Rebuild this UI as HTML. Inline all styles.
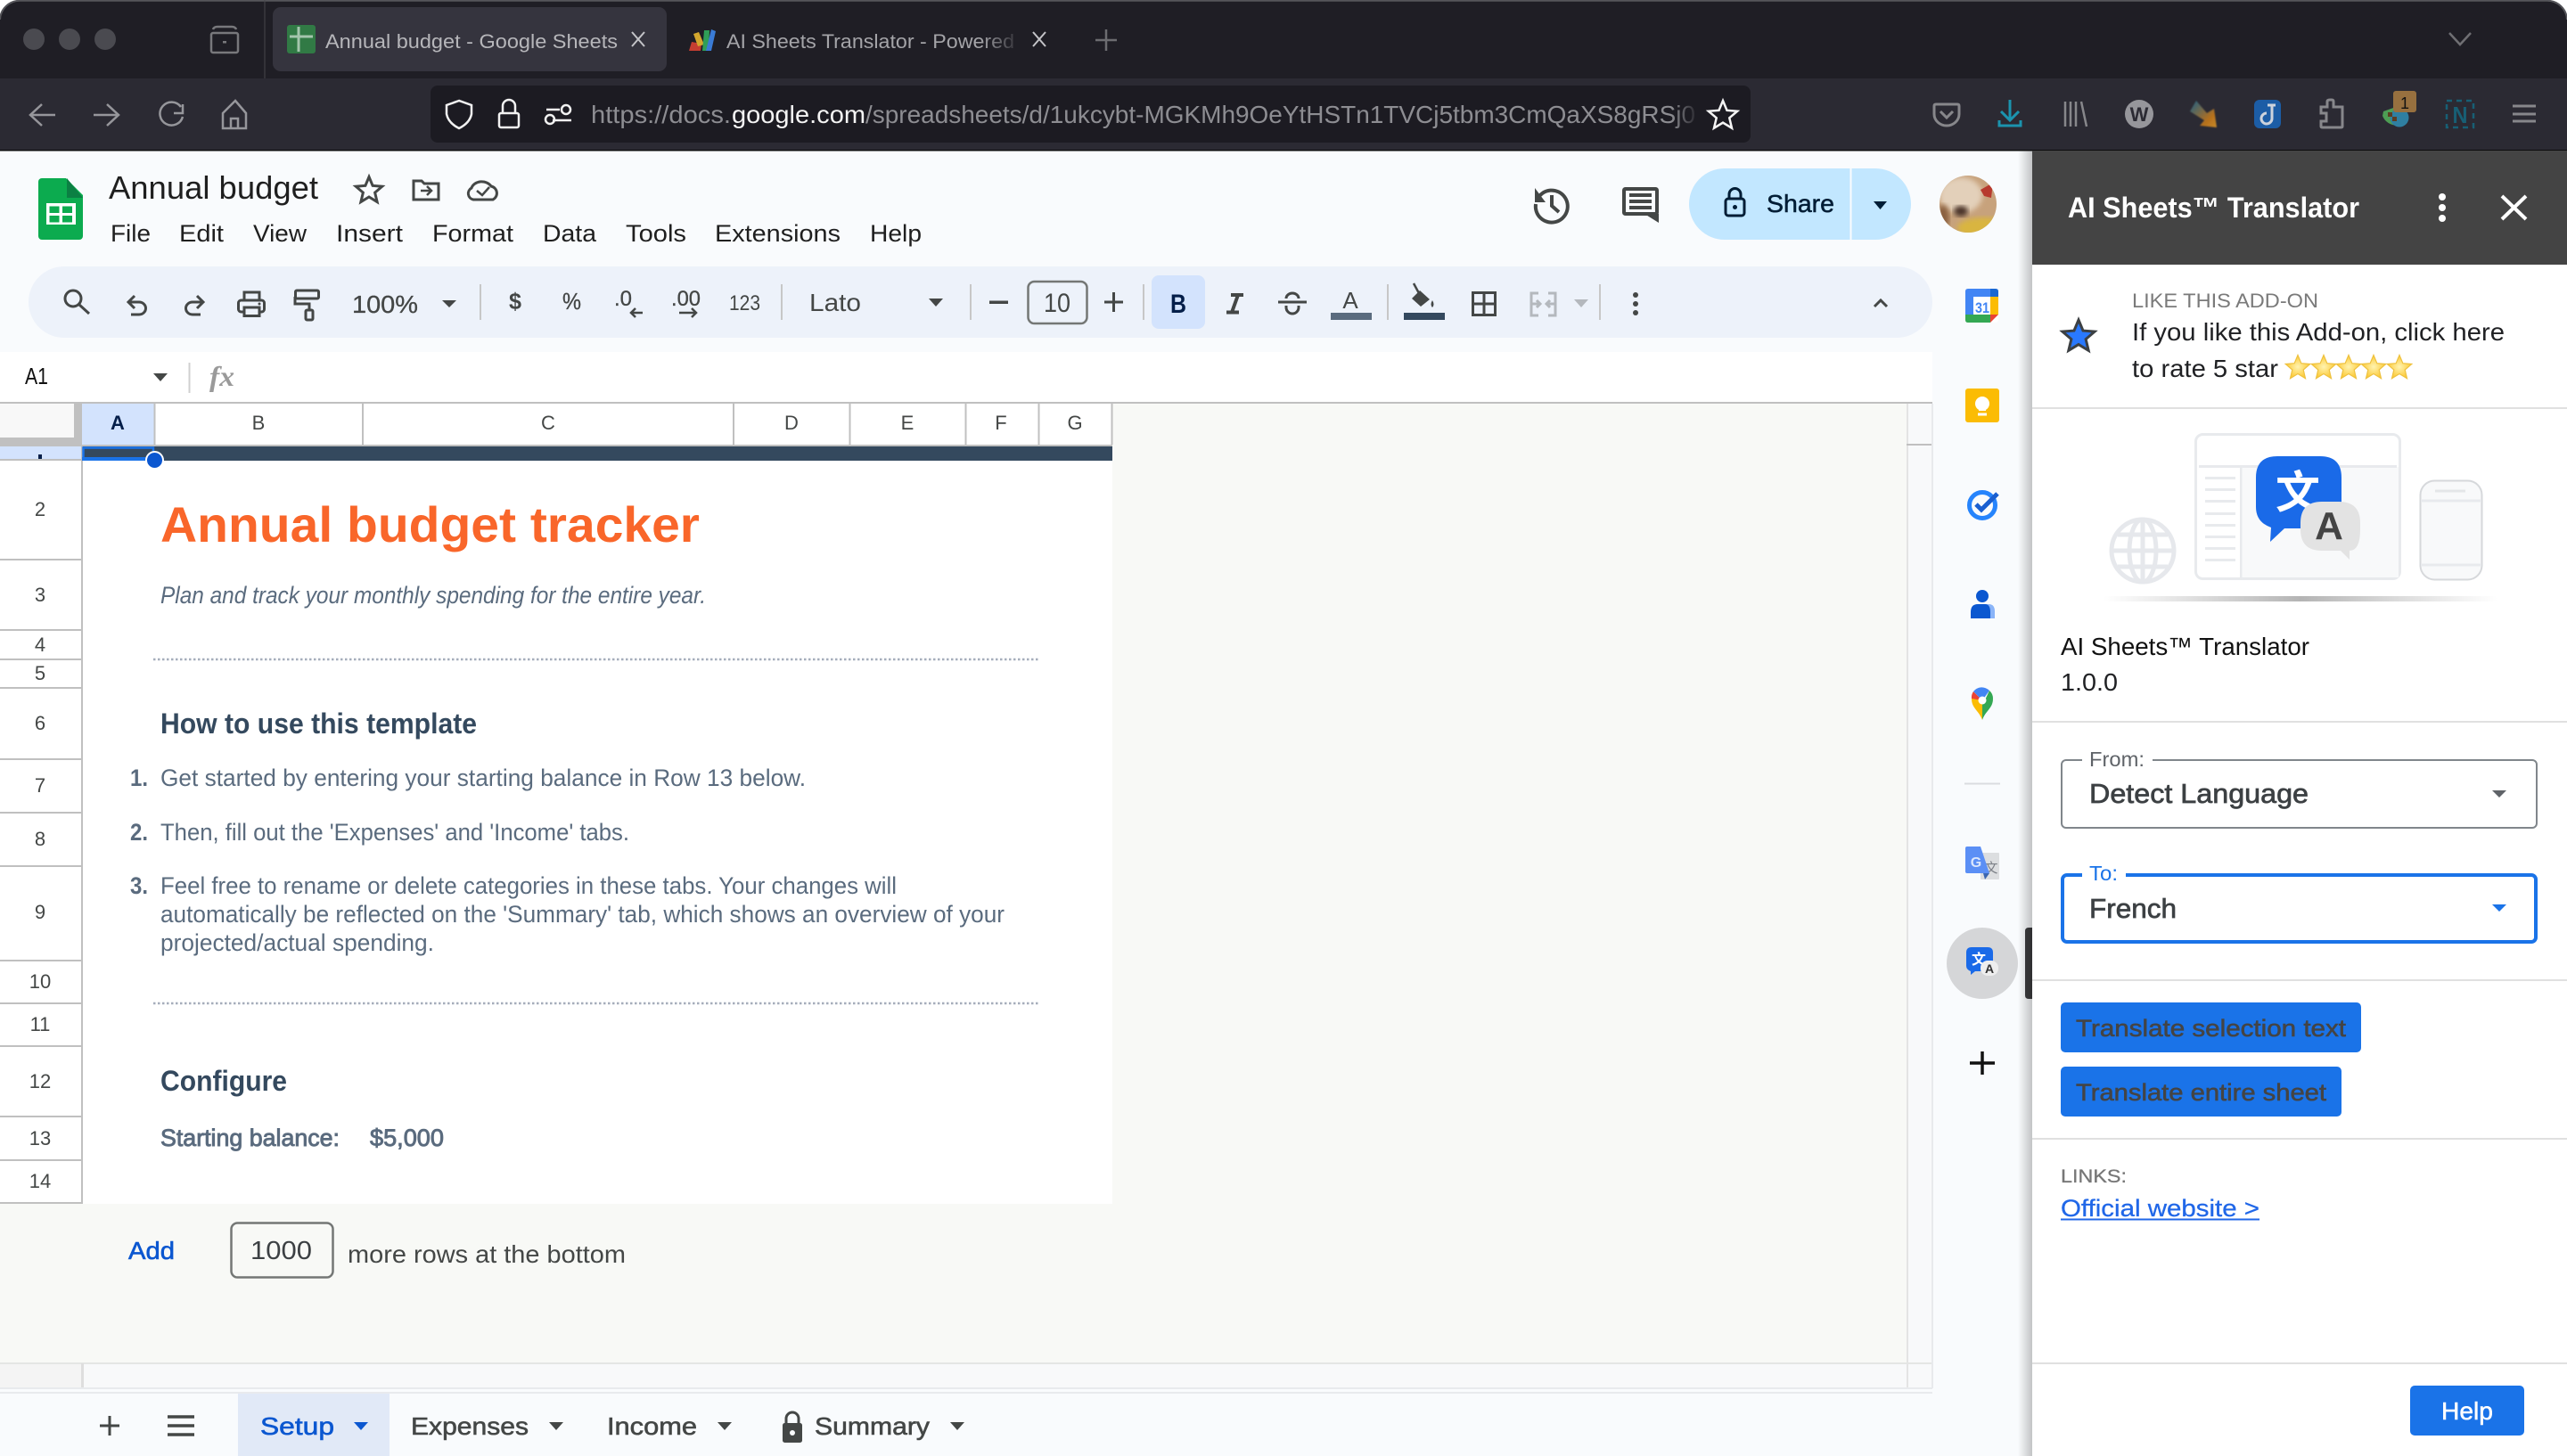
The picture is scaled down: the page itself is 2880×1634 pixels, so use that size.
<!DOCTYPE html>
<html lang="en"><head><meta charset="utf-8"><title>Annual budget - Google Sheets</title>
<style>
html,body{margin:0;padding:0;background:#f9fbfd;width:2880px;height:1634px;overflow:hidden}
svg{display:block}
text{font-family:"Liberation Sans","Noto Sans CJK SC",sans-serif;white-space:pre}
</style></head><body>
<svg width="2880" height="1634" viewBox="0 0 2880 1634" xmlns="http://www.w3.org/2000/svg">
<defs>
<polygon id="st" vector-effect="non-scaling-stroke" points="0,-1 .2645,-.364 .951,-.309 .428,.139 .588,.809 0,.45 -.588,.809 -.428,.139 -.951,-.309 -.2645,-.364"/>
<linearGradient id="fade1"><stop offset="0" stop-color="#1f1e25" stop-opacity="0"/><stop offset="1" stop-color="#1f1e25"/></linearGradient>
<linearGradient id="fade2"><stop offset="0" stop-color="#1c1b22" stop-opacity="0"/><stop offset="1" stop-color="#1c1b22"/></linearGradient>
<linearGradient id="psh"><stop offset="0" stop-color="#000" stop-opacity="0"/><stop offset="1" stop-color="#000" stop-opacity=".22"/></linearGradient>
<linearGradient id="shd"><stop offset="0" stop-color="#bbb" stop-opacity="0"/><stop offset=".5" stop-color="#b4b4b4"/><stop offset="1" stop-color="#bbb" stop-opacity="0"/></linearGradient>
<radialGradient id="gold"><stop offset="0" stop-color="#fff3b0"/><stop offset="1" stop-color="#fcc934"/></radialGradient>
<linearGradient id="comet" x1="0" y1="0" x2="1" y2="1"><stop offset="0" stop-color="#1c5f86"/><stop offset=".7" stop-color="#b5701d"/><stop offset="1" stop-color="#c98a28"/></linearGradient>
<filter id="b3"><feGaussianBlur stdDeviation="3"/></filter>
<filter id="b1"><feGaussianBlur stdDeviation=".9"/></filter>
<clipPath id="av"><circle cx="2208" cy="229" r="32"/></clipPath>
</defs>

<!-- page base -->
<rect width="2880" height="1634" fill="#f9fbfd"/>

<!-- browser chrome -->
<rect width="2880" height="30" fill="#fff"/>
<path d="M0 169V22A22 22 0 0 1 22 0H2858A22 22 0 0 1 2880 22V169Z" fill="#1f1e25"/>
<path d="M0 22A22 22 0 0 1 22 0.8H2858A22 22 0 0 1 2880 22" fill="none" stroke="#55555a" stroke-width="2"/>
<rect y="88" width="2880" height="80" fill="#2b2a33"/>
<rect y="168" width="2880" height="1.5" fill="#0c0c0d"/>
<g fill="#4a4a50"><circle cx="38" cy="44" r="12"/><circle cx="78" cy="44" r="12"/><circle cx="118" cy="44" r="12"/></g>
<g fill="none" stroke="#78787c" stroke-width="2.500"><rect x="237" y="37" width="30" height="22" rx="2"/><path d="M239 33Q240 30 244 30H260Q264 30 265 33"/></g>
<rect x="250" y="46" width="4" height="2.500" fill="#78787c"/>
<rect x="296.500" y="0" width="1" height="88" fill="#47474c"/>
<rect x="306" y="8" width="442" height="72" rx="9" fill="#35343e"/>
<rect x="322" y="28" width="32" height="32" rx="3" fill="#317a45"/>
<path d="M335 30V58M325 41H351" stroke="#a4c5ad" stroke-width="3" fill="none"/>
<text x="365" y="54" font-size="22" fill="#b6b6ba" textLength="328" lengthAdjust="spacingAndGlyphs">Annual budget - Google Sheets</text>
<path d="M709 36L723 52M723 36L709 52" stroke="#c4c4c8" stroke-width="2" fill="none"/>
<g>
<path d="M773 57L776 47L787 49L786 57Z" fill="#c53e31"/><path d="M778 38L784 36L790 50L783 52Z" fill="#d3a72e"/><path d="M788 57L790 34L796 34L795 57Z" fill="#2f9e57"/><path d="M792 57L798 33L803 35L798 57Z" fill="#3a7bd5"/>
</g>
<text x="815" y="54" font-size="22" fill="#a4a4a8" textLength="323" lengthAdjust="spacingAndGlyphs">AI Sheets Translator - Powered</text>
<rect x="1100" y="30" width="48" height="36" fill="url(#fade1)"/>
<path d="M1159 36L1173 52M1173 36L1159 52" stroke="#c4c4c8" stroke-width="2" fill="none"/>
<path d="M1241 33V57M1229 45H1253" stroke="#6c6c70" stroke-width="2.500" fill="none"/>
<path d="M2748 37L2760 50L2772 37" stroke="#6f6f73" stroke-width="2.500" fill="none"/>

<!-- nav -->
<g fill="none" stroke="#96969b" stroke-width="2.500">
<path d="M62 129H35M47 117L34 129L47 141"/>
<path d="M105 129H132M120 117L133 129L120 141"/>
<path d="M203 120A13 13 0 1 0 205 131M205 117V127H195"/>
<path d="M264 113L250 127V144H276V127ZM259 144V133H267V144"/>
</g>
<rect x="483" y="96" width="1481" height="64" rx="8" fill="#1c1b22"/>
<path d="M515 113L501 118V128Q503 138 515 144Q527 138 529 128V118Z" fill="none" stroke="#f2f2f2" stroke-width="2.500"/>
<g fill="none" stroke="#f2f2f2" stroke-width="2.500"><rect x="560" y="127" width="22" height="16" rx="2"/><path d="M564 127V119A7 7 0 0 1 578 119V127"/>
<path d="M613 123H628M620 135H641"/><circle cx="635" cy="123" r="5"/><circle cx="617" cy="134" r="5"/></g>
<text y="138" font-size="28"><tspan x="663" fill="#8d8d92" textLength="157" lengthAdjust="spacingAndGlyphs">https://docs.</tspan></text>
<text x="821" y="138" font-size="28" fill="#f4f4f4" textLength="150" lengthAdjust="spacingAndGlyphs">google.com</text>
<text x="971" y="138" font-size="28" fill="#8d8d92" textLength="931" lengthAdjust="spacingAndGlyphs">/spreadsheets/d/1ukcybt-MGKMh9OeYtHSTn1TVCj5tbm3CmQaXS8gRSj0</text>
<rect x="1875" y="110" width="32" height="36" fill="url(#fade2)"/>
<use href="#st" transform="translate(1933 130) scale(17)" fill="none" stroke="#f5f5f5" stroke-width="2.500"/>

<!-- ext icons -->
<g fill="none" stroke="#87878b" stroke-width="3">
<path d="M2172 117H2196Q2198 117 2198 119V128A14 13 0 0 1 2170 128V119Q2170 117 2172 117Z"/>
<path d="M2177 125L2184 132L2191 125"/>
</g>
<g fill="none" stroke="#1b93ae" stroke-width="3"><path d="M2255 112V134M2245 125L2255 135L2265 125M2243 135V141H2267V135"/></g>
<g stroke="#87878b" stroke-width="2.500"><path d="M2317 114V142M2323 114V142M2329 114V142M2335 114L2341 142"/></g>
<ellipse cx="2400" cy="128" rx="16" ry="16" fill="#96969b"/>
<text x="2400" y="136" font-size="22" font-weight="bold" fill="#2b2a33" text-anchor="middle">W</text>
<path d="M2464 113L2476 127L2484 122L2487 143L2468 141L2473 135L2457 125Z" fill="url(#comet)" filter="url(#b1)"/>
<rect x="2529" y="112" width="30" height="32" rx="6" fill="#1c5da6"/>
<path d="M2544 118H2553M2549 118V133A6 6 0 1 1 2543 127" fill="none" stroke="#cdd3dc" stroke-width="3"/>
<path d="M2611 120V114Q2611 112 2614 112H2616Q2618 112 2618 114V120H2628V142Q2628 143 2626 143H2606Q2604 143 2604 142V136H2610V127H2604V120Z" fill="none" stroke="#87878b" stroke-width="3"/>
<path d="M2674 125L2688 120L2690 141Q2677 140 2673 130Z" fill="#4d9d54"/><circle cx="2692" cy="132" r="10.500" fill="#2f7fa1"/>
<rect x="2679" y="126" width="5" height="5" fill="#5c3d22"/><rect x="2684" y="131" width="5" height="5" fill="#5c3d22"/>
<rect x="2685" y="102" width="26" height="24" rx="3" fill="#97703f"/>
<text x="2698" y="122" font-size="18" fill="#111" text-anchor="middle">1</text>
<rect x="2745" y="113" width="30" height="30" fill="none" stroke="#175f75" stroke-width="2.500" stroke-dasharray="6 5"/>
<text x="2760" y="138" font-size="26" font-weight="bold" fill="#175f75" text-anchor="middle" textLength="17" lengthAdjust="spacingAndGlyphs">N</text>
<path d="M2819 119H2845M2819 128H2845M2819 136H2845" stroke="#87878b" stroke-width="3"/>

<!-- Doc header -->
<path d="M47 200H74L93 219V265A4 4 0 0 1 89 269H47A4 4 0 0 1 43 265V204A4 4 0 0 1 47 200Z" fill="#0cab4f"/>
<path d="M75 200L93 222H75Z" fill="#0b8043"/>
<rect x="52" y="228" width="33" height="24" fill="#fff"/>
<g fill="#0cab4f"><rect x="55.500" y="231.500" width="11" height="7.500"/><rect x="70" y="231.500" width="11" height="7.500"/><rect x="55.500" y="242" width="11" height="7.500"/><rect x="70" y="242" width="11" height="7.500"/></g>
<text x="122" y="223" font-size="36" fill="#1f1f1f" textLength="235" lengthAdjust="spacingAndGlyphs">Annual budget</text>
<use href="#st" transform="translate(414 214) scale(15.500)" fill="none" stroke="#444746" stroke-width="3"/>
<path d="M464 203H473L476 206H492V224H464Z" fill="none" stroke="#444746" stroke-width="3"/>
<path d="M472 214H484M479 209L484 214L479 219" fill="none" stroke="#444746" stroke-width="2.500"/>
<path d="M531 224A7 7 0 0 1 529 211A12 10 0 0 1 551 209A8 8 0 0 1 553 224Z" fill="none" stroke="#444746" stroke-width="3"/>
<path d="M535 214L541 219L549 210" fill="none" stroke="#444746" stroke-width="2.500"/>
<g font-size="27" fill="#1f1f1f">
<text x="124" y="271" textLength="45" lengthAdjust="spacingAndGlyphs">File</text>
<text x="201" y="271" textLength="50" lengthAdjust="spacingAndGlyphs">Edit</text>
<text x="284" y="271" textLength="60" lengthAdjust="spacingAndGlyphs">View</text>
<text x="377" y="271" textLength="75" lengthAdjust="spacingAndGlyphs">Insert</text>
<text x="485" y="271" textLength="91" lengthAdjust="spacingAndGlyphs">Format</text>
<text x="609" y="271" textLength="60" lengthAdjust="spacingAndGlyphs">Data</text>
<text x="702" y="271" textLength="68" lengthAdjust="spacingAndGlyphs">Tools</text>
<text x="802" y="271" textLength="141" lengthAdjust="spacingAndGlyphs">Extensions</text>
<text x="976" y="271" textLength="58" lengthAdjust="spacingAndGlyphs">Help</text>
</g>
<!-- history / comments -->
<g fill="none" stroke="#444746" stroke-width="4">
<path d="M1725 223A18 18 0 1 1 1723 229"/><path d="M1741 219V231L1749 238"/>
<rect x="1822" y="212" width="37" height="28" rx="1.500"/>
</g>
<path d="M1722 211V227H1734Z" fill="#444746"/>
<path d="M1845 240H1861V250Z" fill="#444746"/>
<g fill="#444746"><rect x="1828" y="217" width="25" height="4"/><rect x="1828" y="224" width="25" height="4"/><rect x="1828" y="231" width="25" height="4"/></g>
<!-- share -->
<path d="M1935 189H2104A40 40 0 0 1 2144 229A40 40 0 0 1 2104 269H1935A40 40 0 0 1 1895 229A40 40 0 0 1 1935 189Z" fill="#c2e7ff"/>
<rect x="2075.500" y="189" width="2" height="80" fill="#f9fbfd"/>
<g fill="none" stroke="#001d35" stroke-width="3"><rect x="1936" y="223" width="21" height="19" rx="3"/><path d="M1940 223V218A6.500 6.500 0 0 1 1953 218V223"/></g>
<circle cx="1946.500" cy="232.500" r="2.500" fill="#001d35"/>
<text x="1982" y="238" font-size="28" fill="#001d35" stroke="#001d35" stroke-width=".5" textLength="76" lengthAdjust="spacingAndGlyphs">Share</text>
<path d="M2102 226H2117L2109.500 235Z" fill="#001d35"/>
<!-- avatar -->
<g clip-path="url(#av)">
<rect x="2176" y="197" width="64" height="64" fill="#c7a27c"/>
<ellipse cx="2226" cy="256" rx="30" ry="12" fill="#d9b53f" filter="url(#b3)"/>
<ellipse cx="2200" cy="219" rx="24" ry="20" fill="#e3d0ba" filter="url(#b3)"/>
<ellipse cx="2200" cy="237" rx="8" ry="6" fill="#4a3226" filter="url(#b3)"/>
<path d="M2222 213L2236 205L2234 222L2226 220Z" fill="#b73a2e"/>
<ellipse cx="2180" cy="244" rx="7" ry="14" fill="#8a6040" filter="url(#b3)"/>
</g>

<!-- formatting toolbar -->
<rect x="32" y="299" width="2136" height="80" rx="40" fill="#edf2fa"/>
<g fill="none" stroke="#444746" stroke-width="3">
<circle cx="82" cy="335" r="9"/><path d="M89 342L100 352"/>
<path d="M151 332L144 339L151 346M144 339H156A7.500 7 0 0 1 156 353H147"/>
<path d="M221 332L228 339L221 346M228 339H216A7.500 7 0 0 0 216 353H225"/>
<rect x="267.500" y="337" width="29" height="13" rx="3"/><rect x="274" y="328" width="17" height="9"/><rect x="274" y="345" width="17" height="9.500" fill="#edf2fa"/>
<rect x="331.500" y="326" width="26" height="9" rx="1.500"/><path d="M331 333V341H347V348"/><rect x="343" y="348" width="8" height="11" rx="1.500"/>
</g>
<circle cx="291" cy="341" r="1.500" fill="#444746"/>
<text x="395" y="351" font-size="28" fill="#444746" stroke="#444746" stroke-width=".3" textLength="74" lengthAdjust="spacingAndGlyphs">100%</text>
<path d="M496 337H512L504 345Z" fill="#444746"/>
<g fill="#c7c7c7"><rect x="538" y="319" width="2" height="40"/><rect x="876" y="319" width="2" height="40"/><rect x="1088" y="319" width="2" height="40"/><rect x="1282" y="319" width="2" height="40"/><rect x="1556" y="319" width="2" height="40"/><rect x="1794" y="319" width="2" height="40"/></g>
<g fill="#444746">
<text x="571" y="347" font-size="26" font-weight="bold" textLength="14" lengthAdjust="spacingAndGlyphs">$</text>
<text x="631" y="347" font-size="26" stroke="#444746" stroke-width=".3" textLength="21" lengthAdjust="spacingAndGlyphs">%</text>
<text x="689" y="343" font-size="24" stroke="#444746" stroke-width=".3" textLength="20" lengthAdjust="spacingAndGlyphs">.0</text>
<text x="753" y="343" font-size="24" stroke="#444746" stroke-width=".3" textLength="33" lengthAdjust="spacingAndGlyphs">.00</text>
<text x="818" y="348" font-size="24" textLength="35" lengthAdjust="spacingAndGlyphs">123</text>
<text x="908" y="349" font-size="28" textLength="58" lengthAdjust="spacingAndGlyphs">Lato</text>
</g>
<path d="M721 351H708M713 346L708 351L713 356M762 351H781M776 346L781 351L776 356" fill="none" stroke="#444746" stroke-width="2.500"/>
<path d="M1042 335H1058L1050 344Z" fill="#444746"/>
<rect x="1110" y="337.500" width="21" height="3.500" fill="#444746"/>
<rect x="1153.500" y="316" width="66" height="47" rx="7" fill="none" stroke="#747775" stroke-width="2.500"/>
<text x="1171" y="350" font-size="30" fill="#444746" textLength="30" lengthAdjust="spacingAndGlyphs">10</text>
<path d="M1239 339H1260M1249.500 328V350" fill="none" stroke="#444746" stroke-width="3"/>
<rect x="1292" y="309" width="60" height="60" rx="8" fill="#d3e3fd"/>
<text x="1322" y="351" font-size="30" font-weight="bold" fill="#041e49" text-anchor="middle" textLength="18" lengthAdjust="spacingAndGlyphs">B</text>
<path d="M1381 331H1395M1376 350.500H1390M1389 331L1382 350.500" fill="none" stroke="#444746" stroke-width="4"/>
<path d="M1434 339H1466M1443 335A7 6 0 0 1 1457 335M1443 343V345A7 7 0 0 0 1457 345V343" fill="none" stroke="#444746" stroke-width="3"/>
<text x="1515" y="346" font-size="26" fill="#444746" text-anchor="middle">A</text>
<rect x="1493" y="351" width="46" height="8" fill="#5a6b7e"/>
<path d="M1586 318L1593 331" stroke="#444746" stroke-width="2.500"/>
<path d="M1593 326L1604 336L1594 344L1584 335Z" fill="#444746"/>
<path d="M1607 337Q1604 342 1607 345Q1610 342 1607 337Z" fill="#444746"/>
<rect x="1575" y="351" width="46" height="8" fill="#34495e"/>
<path d="M1652.500 328.500H1677.500V353.500H1652.500ZM1665 328.500V353.500M1652.500 341H1677.500" fill="none" stroke="#444746" stroke-width="3"/>
<path d="M1726 329H1718V354H1726M1737 329H1745V354H1737M1717 341H1727M1746 341H1736M1724 337L1728 341L1724 345M1739 337L1735 341L1739 345" fill="none" stroke="#b4b8bd" stroke-width="3"/>
<path d="M1766 336H1782L1774 345Z" fill="#b4b8bd"/>
<g fill="#444746"><circle cx="1835" cy="331" r="3"/><circle cx="1835" cy="341" r="3"/><circle cx="1835" cy="351" r="3"/></g>
<path d="M2103 344L2110 337L2117 344" fill="none" stroke="#444746" stroke-width="3"/>

<!-- formula bar -->
<rect y="395" width="2168" height="56" fill="#fff"/>
<text x="28" y="431" font-size="26" fill="#111" textLength="26" lengthAdjust="spacingAndGlyphs">A1</text>
<path d="M172 419H188L180 428Z" fill="#444746"/>
<rect x="211.500" y="407" width="2" height="34" fill="#d0d0d0"/>
<text x="235" y="433" style='font-family:"Liberation Serif",serif' font-size="32" font-style="italic" font-weight="bold" fill="#9a9a9a" textLength="28" lengthAdjust="spacingAndGlyphs">fx</text>

<!-- grid area -->
<rect y="453" width="2139" height="1077" fill="#f8f9f6"/>
<rect x="2139" y="453" width="29" height="1077" fill="#f8f9fa"/>
<rect y="451" width="2168" height="2" fill="#c0c0c0"/>
<rect x="2139" y="453" width="2" height="1105" fill="#e4e4e4"/>
<rect x="2139" y="498" width="29" height="2" fill="#c0c0c0"/>
<rect x="2167" y="453" width="2" height="1105" fill="#e8eaed"/>
<!-- corner -->
<rect y="453" width="92" height="48" fill="#c0c0c0"/>
<rect y="453" width="83" height="38" fill="#f8f8f8"/>
<!-- col header -->
<rect x="92" y="453" width="1156" height="46" fill="#fff"/>
<rect x="92" y="453" width="81" height="46" fill="#d3e3fd"/>
<rect x="0" y="499" width="1248" height="2" fill="#c0c0c0"/>
<g fill="#c0c0c0"><rect x="172.500" y="453" width="2" height="46"/><rect x="406" y="453" width="2" height="46"/><rect x="822" y="453" width="2" height="46"/><rect x="952.500" y="453" width="2" height="46"/><rect x="1082.500" y="453" width="2" height="46"/><rect x="1164.500" y="453" width="2" height="46"/><rect x="1246.500" y="453" width="2" height="46"/></g>
<g font-size="22" fill="#444746" text-anchor="middle">
<text x="132" y="482" font-weight="bold" fill="#041e49">A</text>
<text x="290" y="482">B</text><text x="615" y="482">C</text><text x="888" y="482">D</text><text x="1018" y="482">E</text><text x="1123" y="482">F</text><text x="1206" y="482">G</text>
</g>
<!-- cells -->
<rect x="92" y="501" width="1156" height="850" fill="#fff"/>
<rect x="92" y="501" width="1156" height="16" fill="#34495e"/>
<!-- row header -->
<rect y="501" width="92" height="850" fill="#fff"/>
<rect y="501" width="92" height="15" fill="#d3e3fd"/>
<rect x="43" y="510" width="4" height="6" fill="#041e49"/>
<rect x="91" y="501" width="2" height="850" fill="#c0c0c0"/>
<g fill="#c0c0c0"><rect y="515" width="92" height="2"/><rect y="627" width="91" height="2"/><rect y="706" width="91" height="2"/><rect y="739" width="91" height="2"/><rect y="771" width="91" height="2"/><rect y="851" width="91" height="2"/><rect y="911" width="91" height="2"/><rect y="971" width="91" height="2"/><rect y="1077" width="91" height="2"/><rect y="1125" width="91" height="2"/><rect y="1173" width="91" height="2"/><rect y="1252" width="91" height="2"/><rect y="1301" width="91" height="2"/><rect y="1349" width="93" height="2"/></g>
<g font-size="22" fill="#444746" text-anchor="middle">
<text x="45" y="579">2</text><text x="45" y="675">3</text><text x="45" y="731">4</text><text x="45" y="763">5</text><text x="45" y="819">6</text><text x="45" y="889">7</text><text x="45" y="949">8</text><text x="45" y="1031">9</text><text x="45" y="1109">10</text><text x="45" y="1157">11</text><text x="45" y="1221">12</text><text x="45" y="1285">13</text><text x="45" y="1333">14</text>
</g>
<!-- selection -->
<path d="M93.500 502.500H172V515.500H93.500Z" fill="none" stroke="#1a73e8" stroke-width="2.500"/>
<rect x="92" y="513" width="81" height="4" fill="#1a73e8"/>
<ellipse cx="173.500" cy="516.500" rx="9.500" ry="9.500" fill="#0b57d0" stroke="#fff" stroke-width="2"/>
<!-- content -->
<text x="180" y="608" font-size="56" font-weight="bold" fill="#f9662a" textLength="605" lengthAdjust="spacingAndGlyphs">Annual budget tracker</text>
<text x="180" y="677" font-size="27" font-style="italic" fill="#5a6b7e" textLength="612" lengthAdjust="spacingAndGlyphs">Plan and track your monthly spending for the entire year.</text>
<path d="M172 740H1167M172 1126H1167" stroke="#a5adbb" stroke-width="2.500" stroke-dasharray="2.500 2.500" fill="none"/>
<text x="180" y="823" font-size="32" font-weight="bold" fill="#34495e" textLength="355" lengthAdjust="spacingAndGlyphs">How to use this template</text>
<g font-size="27" fill="#5a6b7e">
<text x="146" y="882" font-weight="bold" textLength="20" lengthAdjust="spacingAndGlyphs">1.</text>
<text x="180" y="882" textLength="724" lengthAdjust="spacingAndGlyphs">Get started by entering your starting balance in Row 13 below.</text>
<text x="146" y="943" font-weight="bold" textLength="20" lengthAdjust="spacingAndGlyphs">2.</text>
<text x="180" y="943" textLength="526" lengthAdjust="spacingAndGlyphs">Then, fill out the 'Expenses' and 'Income' tabs.</text>
<text x="146" y="1003" font-weight="bold" textLength="20" lengthAdjust="spacingAndGlyphs">3.</text>
<text x="180" y="1003" textLength="826" lengthAdjust="spacingAndGlyphs">Feel free to rename or delete categories in these tabs. Your changes will</text>
<text x="180" y="1035" textLength="947" lengthAdjust="spacingAndGlyphs">automatically be reflected on the 'Summary' tab, which shows an overview of your</text>
<text x="180" y="1067" textLength="307" lengthAdjust="spacingAndGlyphs">projected/actual spending.</text>
</g>
<text x="180" y="1224" font-size="32" font-weight="bold" fill="#34495e" textLength="142" lengthAdjust="spacingAndGlyphs">Configure</text>
<g font-size="27" fill="#5a6b7e" stroke="#5a6b7e" stroke-width=".9">
<text x="180" y="1286" textLength="201" lengthAdjust="spacingAndGlyphs">Starting balance:</text>
<text x="415" y="1286" textLength="83" lengthAdjust="spacingAndGlyphs">$5,000</text>
</g>

<!-- add rows -->
<text x="144" y="1413" font-size="28" fill="#0b57d0" stroke="#0b57d0" stroke-width=".6" textLength="52" lengthAdjust="spacingAndGlyphs">Add</text>
<rect x="259.500" y="1372.500" width="114" height="61" rx="7" fill="none" stroke="#747775" stroke-width="2.500"/>
<text x="281" y="1413" font-size="29" fill="#3c4043" textLength="69" lengthAdjust="spacingAndGlyphs">1000</text>
<text x="390" y="1417" font-size="28" fill="#444746" textLength="312" lengthAdjust="spacingAndGlyphs">more rows at the bottom</text>

<!-- bottom scrollbar -->
<rect y="1529" width="2168" height="2" fill="#e4e6e4"/>
<rect y="1531" width="92" height="27" fill="#f4f4f4"/>
<rect x="92" y="1531" width="2076" height="27" fill="#f8f9fa"/>
<rect x="91" y="1530" width="3" height="28" fill="#dedede"/>
<rect x="2139" y="1530" width="2" height="28" fill="#e4e4e4"/>
<rect y="1557" width="2168" height="2" fill="#e8eaed"/>
<rect x="0" y="1559" width="2168" height="75" fill="#f9fbfd"/>
<rect y="1562" width="2168" height="2" fill="#e8eaed"/>
<path d="M112 1600H134M123 1589V1611" stroke="#444746" stroke-width="3" fill="none"/>
<path d="M188 1590H218M188 1600H218M188 1610H218" stroke="#444746" stroke-width="3.500" fill="none"/>
<rect x="267" y="1564" width="170" height="70" fill="#e1e9f7"/>
<g font-size="28" stroke-width=".6">
<text x="292" y="1610" fill="#0b57d0" stroke="#0b57d0" textLength="83" lengthAdjust="spacingAndGlyphs">Setup</text>
<text x="461" y="1610" fill="#444746" stroke="#444746" textLength="132" lengthAdjust="spacingAndGlyphs">Expenses</text>
<text x="681" y="1610" fill="#444746" stroke="#444746" textLength="101" lengthAdjust="spacingAndGlyphs">Income</text>
<text x="914" y="1610" fill="#444746" stroke="#444746" textLength="129" lengthAdjust="spacingAndGlyphs">Summary</text>
</g>
<path d="M397 1596H413L405 1605Z" fill="#0b57d0"/>
<path d="M616 1596H632L624 1605ZM805 1596H821L813 1605ZM1066 1596H1082L1074 1605Z" fill="#444746"/>
<rect x="878" y="1597" width="22" height="22" rx="2.500" fill="#444746"/>
<path d="M882 1598V1592A7 7 0 0 1 896 1592V1598" fill="none" stroke="#444746" stroke-width="3"/>
<circle cx="889" cy="1608" r="3" fill="#f9fbfd"/>

<!-- right icon rail -->
<rect x="2168" y="395" width="112" height="1239" fill="#f9fbfd"/>
<rect x="2167" y="453" width="2" height="1105" fill="#e8eaed"/>
<!-- calendar -->
<rect x="2205" y="324" width="37" height="38" rx="3" fill="#fff"/>
<path d="M2205 327Q2205 324 2208 324H2233V333H2214V353H2205Z" fill="#4285f4"/>
<path d="M2233 324H2239Q2242 324 2242 327V333H2233Z" fill="#1967d2"/>
<path d="M2233 333H2242V353H2233Z" fill="#fbbc04"/>
<path d="M2214 353H2233V362H2208Q2205 362 2205 359V353Z" fill="#34a853"/>
<path d="M2233 362V353H2242Z" fill="#ea4335"/>
<text x="2224" y="351" font-size="17" font-weight="bold" fill="#4285f4" text-anchor="middle" textLength="16" lengthAdjust="spacingAndGlyphs">31</text>
<!-- keep -->
<rect x="2205" y="436" width="38" height="38" rx="3" fill="#fbbc04"/>
<circle cx="2224" cy="453" r="8" fill="#fff"/><rect x="2220" y="455" width="8" height="6" fill="#fff"/><rect x="2219" y="463.500" width="10" height="3" fill="#fff"/>
<!-- tasks -->
<circle cx="2224" cy="567" r="14.500" fill="none" stroke="#2684fc" stroke-width="5"/>
<path d="M2217 566L2223 572L2241 554" fill="none" stroke="#1a5fd0" stroke-width="5"/>
<!-- contacts -->
<path d="M2222 678H2231Q2238 678 2238 686V694H2222Z" fill="#8ab4f8"/>
<circle cx="2224" cy="669" r="7" fill="#0b57d0"/>
<path d="M2211 694V687Q2211 678 2219 678H2227Q2233 678 2233 687V694Z" fill="#0b57d0"/>
<!-- maps -->
<path d="M2224 808C2220 797 2212 795 2212 784L2224 784Z" fill="#fbbc04"/>
<path d="M2224 808C2228 797 2236 795 2236 784L2224 790Z" fill="#34a853"/>
<path d="M2214 776A12 12 0 0 0 2212 784L2224 786Z" fill="#ea4335"/>
<path d="M2214 776A12 12 0 0 1 2232 775L2224 786Z" fill="#4285f4"/>
<path d="M2232 775A12 12 0 0 1 2236 784L2224 792Z" fill="#34a853"/>
<circle cx="2224" cy="786" r="4.500" fill="#fff"/>
<rect x="2204" y="878.500" width="40" height="2" fill="#dadce0"/>
<!-- g translate -->
<rect x="2222" y="957" width="21" height="30" rx="1" fill="#dcdee0"/>
<text x="2234" y="979" font-size="15" fill="#7c8087" text-anchor="middle">文</text>
<path d="M2207 950H2222L2232 980H2207Q2205 980 2205 978V952Q2205 950 2207 950Z" fill="#5b8ff5"/>
<path d="M2225 980H2232L2227 987Z" fill="#3b66b0"/>
<text x="2217" y="973" font-size="16" font-weight="bold" fill="#dbe7fd" text-anchor="middle">G</text>
<!-- active -->
<circle cx="2224" cy="1081" r="40" fill="#d5d6d8"/>
<path d="M2212 1063H2230Q2236 1063 2236 1069V1084Q2236 1090 2230 1090H2216L2211 1094V1090Q2206 1088 2206 1084V1069Q2206 1063 2212 1063Z" fill="#1a6ae8"/>
<text x="2220" y="1082" font-size="16" font-weight="bold" fill="#fff" text-anchor="middle">文</text>
<rect x="2222" y="1078" width="20" height="17" rx="8" fill="#eee"/>
<text x="2232" y="1092" font-size="14" font-weight="bold" fill="#333" text-anchor="middle">A</text>
<path d="M2280 1041H2276Q2272 1041 2272 1045V1117Q2272 1121 2276 1121H2280Z" fill="#3d3d3f"/>
<path d="M2210 1193H2238M2224 1180V1206" stroke="#111" stroke-width="3.500" fill="none"/>

<!-- add-on panel -->
<rect x="2264" y="169" width="16" height="1465" fill="url(#psh)"/>
<rect x="2280" y="169" width="600" height="1465" fill="#fff"/>
<rect x="2280" y="169" width="600" height="128" fill="#444"/>
<text x="2320" y="244" font-size="32" font-weight="bold" fill="#fff" textLength="327" lengthAdjust="spacingAndGlyphs">AI Sheets™ Translator</text>
<g fill="#fff"><circle cx="2740" cy="221" r="4"/><circle cx="2740" cy="233" r="4"/><circle cx="2740" cy="245" r="4"/></g>
<path d="M2807 220L2834 246M2834 220L2807 246" stroke="#fff" stroke-width="4" fill="none"/>

<text x="2392" y="345" font-size="22" fill="#7a7a7a" textLength="209" lengthAdjust="spacingAndGlyphs">LIKE THIS ADD-ON</text>
<text x="2392" y="382" font-size="28" fill="#202124" textLength="418" lengthAdjust="spacingAndGlyphs">If you like this Add-on, click here</text>
<text x="2392" y="423" font-size="28" fill="#202124" textLength="164" lengthAdjust="spacingAndGlyphs">to rate 5 star</text>
<use href="#st" transform="translate(2332 378) scale(19)" fill="#2979ff" stroke="#3c4043" stroke-width="3"/>
<g fill="url(#gold)" stroke="#eec13f" stroke-width="1.200">
<use href="#st" transform="translate(2578 413) scale(14.500)"/><use href="#st" transform="translate(2607 413) scale(14.500)"/><use href="#st" transform="translate(2635 413) scale(14.500)"/><use href="#st" transform="translate(2663 413) scale(14.500)"/><use href="#st" transform="translate(2692 413) scale(14.500)"/>
</g>
<rect x="2280" y="457" width="600" height="2" fill="#e0e0e0"/>

<!-- illustration -->
<circle cx="2404" cy="618" r="35" fill="none" stroke="#e6e8ec" stroke-width="5"/>
<ellipse cx="2404" cy="618" rx="15" ry="35" fill="none" stroke="#e6e8ec" stroke-width="5"/>
<path d="M2404 583V653M2369 618H2439M2376 600H2432M2376 636H2432" stroke="#e6e8ec" stroke-width="5" fill="none"/>
<rect x="2463.500" y="487.500" width="229" height="162" rx="8" fill="#fff" stroke="#e8eaed" stroke-width="3"/>
<rect x="2514" y="524" width="177" height="124" fill="#f8f9fa"/>
<rect x="2467" y="522" width="222" height="3" fill="#e8eaed"/>
<rect x="2513" y="523" width="2.500" height="126" fill="#e8eaed"/>
<g fill="#e8eaed"><rect x="2474" y="535" width="34" height="3"/><rect x="2474" y="548" width="34" height="3"/><rect x="2474" y="561" width="34" height="3"/><rect x="2474" y="575" width="34" height="3"/><rect x="2474" y="588" width="34" height="3"/><rect x="2474" y="601" width="34" height="3"/><rect x="2474" y="614" width="34" height="3"/><rect x="2474" y="627" width="34" height="3"/></g>
<path d="M2555 512H2603Q2627 512 2627 536V569Q2627 593 2603 593H2563L2547 608L2548 592Q2531 586 2531 569V536Q2531 512 2555 512Z" fill="#1a6ae8"/>
<text x="2578" y="570" font-size="50" font-weight="bold" fill="#fff" text-anchor="middle" style='font-family:"Noto Sans CJK SC",sans-serif'>文</text>
<path d="M2605 563H2624Q2648 563 2648 587V594Q2648 618 2636 618V628L2626 618H2605Q2581 618 2581 594V587Q2581 563 2605 563Z" fill="#e3e3e3"/>
<text x="2613" y="605" font-size="44" font-weight="bold" fill="#444" text-anchor="middle">A</text>
<rect x="2715.500" y="539.500" width="69" height="111" rx="16" fill="#f8f9fa" stroke="#d6d8db" stroke-width="2"/>
<path d="M2716 562H2784M2716 634H2784" stroke="#e8eaed" stroke-width="3" fill="none"/>
<path d="M2732 551H2766" stroke="#e4e6e8" stroke-width="3" fill="none"/>
<rect x="2360" y="669" width="442" height="6" rx="3" fill="url(#shd)"/>

<text x="2312" y="735" font-size="28" fill="#111" textLength="279" lengthAdjust="spacingAndGlyphs">AI Sheets™ Translator</text>
<text x="2312" y="775" font-size="28" fill="#202124" textLength="64" lengthAdjust="spacingAndGlyphs">1.0.0</text>
<rect x="2280" y="809" width="600" height="2" fill="#e0e0e0"/>

<rect x="2313" y="853" width="533" height="76" rx="5" fill="#fff" stroke="#80868b" stroke-width="2"/>
<rect x="2336" y="846" width="79" height="12" fill="#fff"/>
<text x="2344" y="860" font-size="23" fill="#5f6368" textLength="62" lengthAdjust="spacingAndGlyphs">From:</text>
<text x="2344" y="901" font-size="31" fill="#3c4043" stroke="#3c4043" stroke-width=".7" textLength="246" lengthAdjust="spacingAndGlyphs">Detect Language</text>
<path d="M2796 887H2812L2804 895Z" fill="#5f6368"/>
<rect x="2314" y="982" width="531" height="75" rx="5" fill="#fff" stroke="#1a73e8" stroke-width="4"/>
<rect x="2336" y="974" width="49" height="14" fill="#fff"/>
<text x="2344" y="988" font-size="23" fill="#1a73e8" textLength="32" lengthAdjust="spacingAndGlyphs">To:</text>
<text x="2344" y="1030" font-size="31" fill="#3c4043" stroke="#3c4043" stroke-width=".7" textLength="98" lengthAdjust="spacingAndGlyphs">French</text>
<path d="M2796 1015H2812L2804 1023Z" fill="#1a73e8"/>
<rect x="2280" y="1099" width="600" height="2" fill="#e0e0e0"/>
<rect x="2312" y="1125" width="337" height="56" rx="5" fill="#1a73e8"/>
<text x="2329" y="1163" font-size="27" fill="#444" stroke="#444" stroke-width=".6" textLength="303" lengthAdjust="spacingAndGlyphs">Translate selection text</text>
<rect x="2312" y="1197" width="315" height="56" rx="5" fill="#1a73e8"/>
<text x="2329" y="1235" font-size="27" fill="#444" stroke="#444" stroke-width=".6" textLength="281" lengthAdjust="spacingAndGlyphs">Translate entire sheet</text>
<rect x="2280" y="1277" width="600" height="2" fill="#e0e0e0"/>
<text x="2312" y="1327" font-size="21" fill="#777" stroke="#777" stroke-width=".3" textLength="74" lengthAdjust="spacingAndGlyphs">LINKS:</text>
<text x="2312" y="1365" font-size="27" fill="#2067e8" stroke="#2067e8" stroke-width=".3" textLength="223" lengthAdjust="spacingAndGlyphs">Official website &gt;</text>
<rect x="2312" y="1367.500" width="223" height="2" fill="#2067e8"/>
<rect x="2280" y="1529" width="600" height="2" fill="#e0e0e0"/>
<rect x="2704" y="1555" width="128" height="56" rx="5" fill="#1a73e8"/>
<text x="2739" y="1593" font-size="28" fill="#fff" stroke="#fff" stroke-width=".5" textLength="58" lengthAdjust="spacingAndGlyphs">Help</text>
</svg>
</body></html>
